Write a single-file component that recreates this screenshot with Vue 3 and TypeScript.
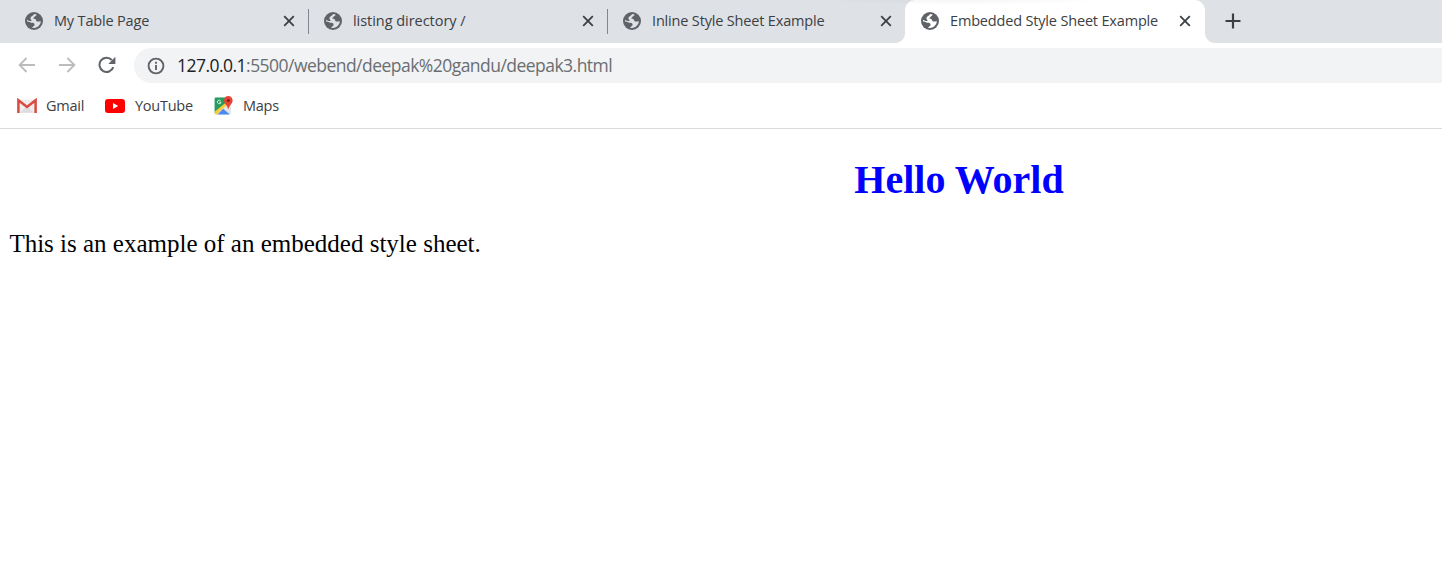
<script setup lang="ts">
interface Tab {
  title: string
  kind: string
  active?: boolean
}

const tabs: Tab[] = [
  { title: 'My Table Page', kind: 'table' },
  { title: 'listing directory /', kind: 'listing' },
  { title: 'Inline Style Sheet Example', kind: 'inline' },
  { title: 'Embedded Style Sheet Example', kind: 'embedded', active: true },
]
</script>

<template>
  <div class="browser">
    <div class="strip">
      <div v-for="tab in tabs" :key="tab.kind" class="tab" :class="[tab.kind, { active: tab.active }]">
        <svg class="globe" viewBox="0 0 18 18">
          <circle cx="9" cy="9" r="9" fill="#5f6368" />
          <path
            d="M9.2 2.1L11.6 2.5C11.4 4 9.8 4.2 9.3 5.1C9 5.8 8.2 6 8.4 6.6C8.8 7.2 10.2 6.6 10.8 7.4C11.3 8.2 11 9 12.2 9.4C13.6 9.8 14.6 9 15.9 9.3A7 7 0 0 1 7.2 15.8C7 14.5 9.6 14.2 9.6 12.7C9.6 11.3 8.4 10.8 7 10.8C5.6 10.7 5 9.4 2.1 9.4C2 8.8 2.1 8.2 2.2 7.7C3.4 8.6 5 9.2 6.4 8.9C7.3 8.6 5.4 7.6 5.4 6.3C5.5 4.6 8 3.9 9.2 2.1Z"
            class="land"
          />
        </svg>
        <span class="title">{{ tab.title }}</span>
        <svg class="close" viewBox="0 0 12 12"><path d="M1.2 1.2l9.6 9.6M10.8 1.2L1.2 10.8" /></svg>
      </div>
      <svg class="plus" viewBox="0 0 16 16"><path d="M8 .5v15M.5 8h15" /></svg>
      <div class="shade"></div>
    </div>

    <div class="toolbar">
      <svg class="arrow" viewBox="0 0 18 16"><path d="M17 8H2M8.6 1L1.6 8l7 7" /></svg>
      <svg class="arrow" viewBox="0 0 18 16"><path d="M1 8h15M9.4 1l7 7-7 7" /></svg>
      <svg class="reload" viewBox="0 0 18 18">
        <path d="M15.3 11.2A7.1 7.1 0 1 1 13.8 4" />
        <path d="M17.4 .8v7.1h-7.1z" class="head" />
      </svg>
      <div class="omnibox">
        <svg class="info" viewBox="0 0 18 18">
          <circle cx="9" cy="9" r="7.4" />
          <path d="M9 8v5M9 4.7v2" />
        </svg>
        <span class="url"><span class="host">127.0.0.1</span>:5500/webend/deepak%20gandu/deepak3.html</span>
      </div>
    </div>

    <div class="bookmarks">
      <div class="bookmark gmail">
        <svg viewBox="0 0 20 16" width="20" height="16">
          <path d="M1 1.5h18V15H1z" fill="#eeeeee" />
          <path d="M3 14.8L10 8l7 6.8z" fill="#dedede" />
          <path d="M1.4 15V2.2L10 9l8.6-6.8V15" fill="none" stroke="#db4a40" stroke-width="2.5" />
        </svg>
        <span>Gmail</span>
      </div>
      <div class="bookmark youtube">
        <svg viewBox="0 0 20 14" width="20" height="14">
          <rect width="20" height="14" rx="3" fill="#f00" />
          <path d="M8 4l5.2 3L8 10z" fill="#fff" />
        </svg>
        <span>YouTube</span>
      </div>
      <div class="bookmark maps">
        <svg viewBox="0 0 19 19" width="19" height="19">
          <rect x=".6" y="1.6" width="16.4" height="16.8" rx="1.5" fill="#e4e5e7" />
          <path d="M2 1.6H12L11.5 8 .6 17V3Q.6 1.6 2 1.6z" fill="#269c5c" />
          <path d="M.6 15.8L12.5 6l1.6 1.6L3 18.4H2Q.6 18.4 .6 17z" fill="#fbcb3b" />
          <path d="M3.6 18.4l5.6-5.7L15.8 18.4z" fill="#4a89f3" />
          <path d="M6.6 4.8A1.8 1.8 0 1 0 7 6.2H5.4" fill="none" stroke="#d8efe1" stroke-width="1" />
          <path d="M14.3 .1a4.3 4.3 0 0 1 4.3 4.3c0 3.4-3.4 4.4-4.3 9.2-.9-4.8-4.3-5.8-4.3-9.2A4.3 4.3 0 0 1 14.3 .1z" fill="#e84335" />
          <circle cx="14.3" cy="4.4" r="1.5" fill="#7d231d" />
        </svg>
        <span>Maps</span>
      </div>
    </div>

    <main class="page">
      <h1>Hello World</h1>
      <p>This is an example of an embedded style sheet.</p>
    </main>
  </div>
</template>

<style scoped>
.browser {
  width: 1442px;
  height: 567px;
  overflow: hidden;
  background: #fff;
  font-family: 'Open Sans', 'Noto Sans', sans-serif;
  color: #3c4043;
}
.strip {
  position: relative;
  display: flex;
  align-items: center;
  height: 43px;
  padding-left: 10px;
  background: #dee1e6;
}
.tab {
  position: relative;
  box-sizing: border-box;
  display: flex;
  align-items: center;
  flex: none;
  width: 299px;
  height: 43px;
  padding: 0 14px 0 15px;
  font-size: 14.5px;
}
.tab.inline {
  width: 297px;
  padding-right: 13px;
}
.tab.table::after,
.tab.listing::after {
  content: '';
  position: absolute;
  right: 0;
  top: 9px;
  width: 1px;
  height: 25px;
  background: #80868b;
}
.tab.active {
  width: 300px;
  padding: 0 14px 0 16px;
  background: #fff;
  border-radius: 10px 10px 0 0;
}
.tab.active::before,
.tab.active::after {
  content: '';
  position: absolute;
  bottom: 0;
  width: 10px;
  height: 10px;
}
.tab.active::before {
  left: -10px;
  background: radial-gradient(circle at 0 0, transparent 9.5px, #fff 10.5px);
}
.tab.active::after {
  right: -10px;
  background: radial-gradient(circle at 100% 0, transparent 9.5px, #fff 10.5px);
}
.globe {
  flex: none;
  width: 18px;
  height: 18px;
  margin-top: -1px;
}
.land {
  fill: #dee1e6;
}
.active .land {
  fill: #fff;
}
.title {
  flex: 1;
  margin-left: 11px;
  margin-top: -2px;
  letter-spacing: -0.17px;
  white-space: nowrap;
}
.listing .title {
  letter-spacing: -0.04px;
}
.close {
  width: 12px;
  height: 12px;
  margin-top: -1px;
  fill: none;
  stroke: #3c4043;
  stroke-width: 1.8;
}
.plus {
  width: 16px;
  height: 16px;
  margin-left: 20px;
  margin-top: -1px;
  fill: none;
  stroke: #3c4043;
  stroke-width: 2.2;
}
.shade {
  position: absolute;
  left: 820px;
  top: 0;
  width: 285px;
  height: 5px;
  background: radial-gradient(ellipse 50% 100% at 50% 0, rgba(0, 0, 0, 0.04), transparent);
}
.toolbar {
  display: flex;
  align-items: center;
  height: 45px;
  padding-left: 18px;
}
.arrow {
  flex: none;
  width: 18px;
  height: 16px;
  margin-top: -1px;
  margin-right: 22px;
  fill: none;
  stroke: #babcbe;
  stroke-width: 1.8;
}
.reload {
  flex: none;
  width: 18px;
  height: 18px;
  margin-top: -1px;
  fill: none;
  stroke: #5f6368;
  stroke-width: 2;
}
.reload .head {
  fill: #5f6368;
  stroke: none;
}
.omnibox {
  display: flex;
  align-items: center;
  flex: 1;
  height: 35px;
  margin-left: 18px;
  padding-left: 13px;
  border-radius: 18px 0 0 18px;
  background: #f1f3f4;
}
.info {
  width: 18px;
  height: 18px;
  fill: none;
  stroke: #5f6368;
  stroke-width: 1.9;
}
.url {
  margin-left: 12px;
  margin-top: -1px;
  font-size: 17.5px;
  letter-spacing: -0.53px;
  color: #6a6e72;
  white-space: nowrap;
}
.host {
  color: #202124;
}
.bookmarks {
  position: relative;
  display: flex;
  align-items: center;
  box-sizing: border-box;
  height: 41px;
  padding: 0 0 5px 17px;
  border-bottom: 1px solid #dadce0;
}
.bookmark {
  display: flex;
  align-items: center;
  font-size: 14.5px;
  letter-spacing: -0.25px;
}
.bookmark span {
  margin-left: 10px;
  margin-top: -1px;
}
.gmail {
  width: 88px;
}
.gmail span {
  margin-left: 9px;
}
.youtube {
  width: 109px;
}
.page {
  width: 1918px;
  color: #000;
  font-family: 'Liberation Serif', 'Times New Roman', serif;
}
h1 {
  margin: 28px 0 0;
  text-align: center;
  font-size: 40px;
  line-height: 46px;
  color: #00f;
}
p {
  margin: 26px 0 0 9.4px;
  font-size: 25px;
  line-height: 29px;
}
</style>
